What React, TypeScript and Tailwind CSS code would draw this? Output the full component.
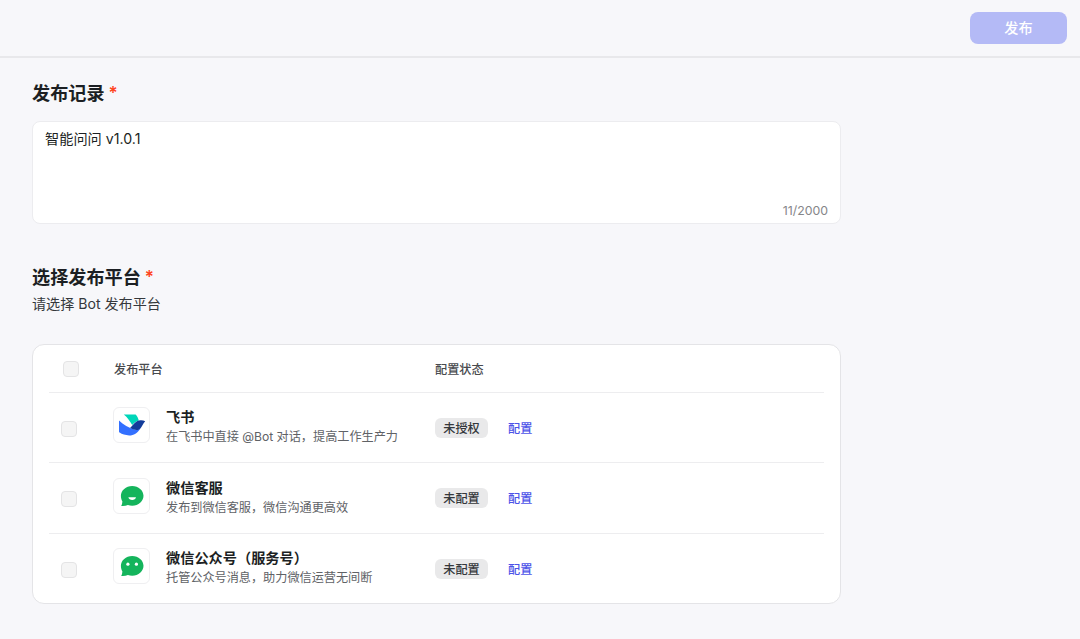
import React from 'react';

type Platform = {
  name: string;
  desc: string;
  status: string;
  icon: React.ReactNode;
};

const FeishuIcon = () => (
  <svg width="28" height="28" viewBox="0 0 28 28">
    <path d="M5.8 3.4H17.6C19.2 5.1 20.3 7.3 20.8 9.6C18.2 10.4 16.2 12 14.2 14C12 10 9.4 6.4 5.8 3.4Z" fill="#00d6b9" />
    <path d="M1 9.6C5.4 13.8 10.8 17 16.6 18.4C18.6 18.9 20.6 18.6 22.4 17.4C19.6 22 15.8 24.4 11.2 24.4C7.4 24.4 4 23.4 1.6 21.6C1.2 21.3 1 20.9 1 20.4Z" fill="#3370ff" />
    <path d="M12.2 16.8C15.2 13.8 17.8 9.4 22.6 9.2C24.4 9.1 26 9.5 27.2 10.2C25 12.2 24.4 15 22.6 17.2C20 20.2 15.6 19 12.2 16.8Z" fill="#133c9a" />
  </svg>
);

const Bubble = ({ children }: { children: React.ReactNode }) => (
  <svg width="28" height="28" viewBox="0 0 28 28">
    <path
      d="M14.2 3.9C20.5 3.9 25.5 8.3 25.5 13.8S20.5 23.7 14.2 23.7C12.6 23.7 11.2 23.4 9.9 22.9C8 23.8 5.8 24.1 3.2 23.9C3.9 22.8 4.3 21.4 4.4 19.6C3.4 17.9 2.9 16 2.9 13.8C2.9 8.3 7.9 3.9 14.2 3.9Z"
      fill="#14b45c"
    />
    {children}
  </svg>
);

const platforms: Platform[] = [
  {
    name: '飞书',
    desc: '在飞书中直接 @Bot 对话，提高工作生产力',
    status: '未授权',
    icon: <FeishuIcon />,
  },
  {
    name: '微信客服',
    desc: '发布到微信客服，微信沟通更高效',
    status: '未配置',
    icon: (
      <Bubble>
        <path d="M10.4 15.2H18C17.6 17 16.2 17.9 14.2 17.9S10.8 17 10.4 15.2Z" fill="#fff" />
      </Bubble>
    ),
  },
  {
    name: '微信公众号（服务号）',
    desc: '托管公众号消息，助力微信运营无间断',
    status: '未配置',
    icon: (
      <Bubble>
        <circle cx="9.9" cy="12.2" r="1.6" fill="#fff" />
        <circle cx="18.4" cy="12.2" r="1.6" fill="#fff" />
      </Bubble>
    ),
  },
];

const Checkbox = () => (
  <span className="block h-4 w-4 rounded border border-[#e4e4e5] bg-[#f5f5f5]" />
);

const SectionTitle = ({ children }: { children: React.ReactNode }) => (
  <h2 className="flex h-6 items-center gap-1 text-[18.15px] leading-6 font-semibold text-[#1c1f23]">
    {children}
    <span className="text-[17px] font-semibold text-[#ff441e]">*</span>
  </h2>
);

const App: React.FC = () => {
  return (
    <div className="h-[639px] overflow-hidden bg-[#f7f7fa] font-['Inter','Noto_Sans_CJK_SC',sans-serif] text-[#1c1f23]">
      {/* Top bar */}
      <header className="flex h-[58px] justify-end border-b-2 border-[#e8e8eb] pt-3 pr-[13px]">
        <button className="h-8 w-[97px] rounded-lg bg-[#b4baf6] text-[14.2px] font-medium text-white">
          发布
        </button>
      </header>

      <main className="ml-8 w-[809px]">
        {/* Release notes */}
        <section className="pt-[23px]">
          <SectionTitle>发布记录</SectionTitle>
          <div className="mt-4 flex h-[103px] flex-col justify-between rounded-lg border border-[#ececef] bg-white px-3 pt-1.5 pb-[3px]">
            <p className="text-[14.2px] leading-[22px]">智能问问 v1.0.1</p>
            <span className="self-end text-[12.3px] leading-[18px] text-[#858689]">11/2000</span>
          </div>
        </section>

        {/* Platforms */}
        <section className="pt-[41px]">
          <SectionTitle>选择发布平台</SectionTitle>
          <p className="mt-1 text-[14.1px] leading-[22px] text-[#35383c]">请选择 Bot 发布平台</p>

          <div className="mt-[29px] h-[260px] rounded-xl border border-[#e4e4e7] bg-white px-4">
            <div className="flex h-12 items-center border-b border-[#ededef] text-[12.15px] font-medium text-[#484a4e]">
              <div className="w-[65px] pt-px pl-3.5">
                <Checkbox />
              </div>
              <div className="w-[321px] pt-[3px]">发布平台</div>
              <div className="pt-[3px]">配置状态</div>
            </div>

            {platforms.map((p) => (
              <div
                key={p.name}
                className="flex h-[70.3px] items-center border-b border-[#ededef] last:border-b-0"
              >
                <div className="w-16 pt-0.5 pl-3">
                  <Checkbox />
                </div>
                <div className="flex w-[322px] items-center pb-[4.7px]">
                  <div className="flex h-9 w-[37px] items-center justify-center rounded-md border border-[#efeff1]">
                    {p.icon}
                  </div>
                  <div className="ml-4 pt-0.5">
                    <div className="text-[14.2px] leading-[21px] font-semibold">{p.name}</div>
                    <div className="mt-px text-[12.15px] leading-[18px] text-[#606266]">{p.desc}</div>
                  </div>
                </div>
                <span className="flex h-5 w-[53px] items-center justify-center rounded-md bg-[#e9e9ea] pt-0.5 text-[12.15px] font-medium text-[#35383c]">
                  {p.status}
                </span>
                <a className="ml-5 pt-0.5 text-[12.15px] font-medium text-[#4d53e8]">配置</a>
              </div>
            ))}
          </div>
        </section>
      </main>
    </div>
  );
};

export default App;
